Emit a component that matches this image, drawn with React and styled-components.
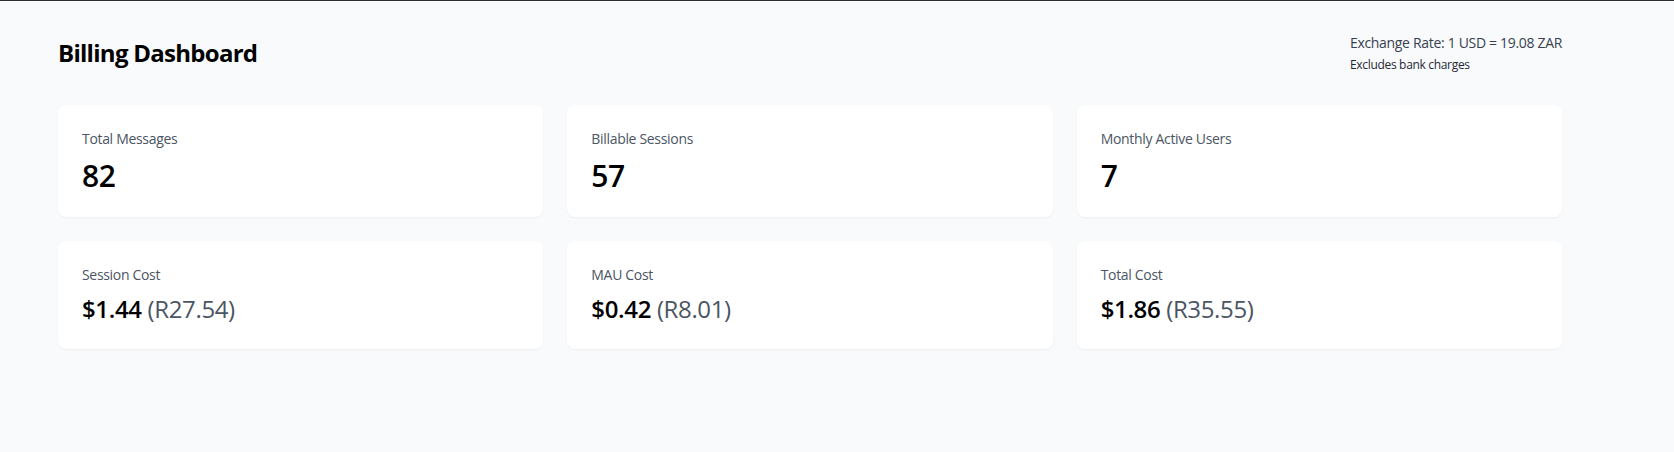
import React from "react";
import styled, { createGlobalStyle } from "styled-components";

const GlobalStyle = createGlobalStyle`
  * { box-sizing: border-box; }
  html, body { margin: 0; padding: 0; background: #f9fafb; }
  body {
    font-family: "Open Sans", "Noto Sans", sans-serif;
    color: #111827;
    letter-spacing: -0.02em;
  }
`;

const Page = styled.div`
  min-height: 452px;
  border-top: 1px solid #2e2e2e;
  background: #f9fafb;
  padding: 32px 112px 32px 58px;
`;

const Header = styled.header`
  display: flex;
  justify-content: space-between;
  align-items: center;
  margin-bottom: 32px;
`;

const Title = styled.h1`
  margin: 0;
  font-size: 24px;
  line-height: 32px;
  font-weight: 700;
  letter-spacing: -0.03em;
  color: #000;
`;

const RateBlock = styled.div`
  display: flex;
  flex-direction: column;
`;

const RateLine = styled.div`
  font-size: 14px;
  line-height: 20px;
  color: #374151;
`;

const RateNote = styled.div`
  margin-top: 4px;
  font-size: 12px;
  line-height: 16px;
  color: #1f2937;
`;

const Grid = styled.div`
  display: grid;
  grid-template-columns: repeat(3, 1fr);
  gap: 24px;
`;

const Card = styled.div`
  background: #fff;
  border-radius: 8px;
  padding: 24px;
  box-shadow: 0 1px 2px rgba(0, 0, 0, 0.05);
`;

const Label = styled.div`
  font-size: 14px;
  line-height: 20px;
  color: #4b5563;
`;

const Value = styled.div`
  margin-top: ${(p) => (p.$large ? "9px" : "8px")};
  font-size: ${(p) => (p.$large ? "30px" : "24px")};
  line-height: ${(p) => (p.$large ? "35px" : "32px")};
  font-weight: 600;
  letter-spacing: -0.015em;
  color: #000;
`;

const Converted = styled.span`
  font-weight: 400;
  color: #4b5563;
`;

const counts = [
  { label: "Total Messages", value: "82" },
  { label: "Billable Sessions", value: "57" },
  { label: "Monthly Active Users", value: "7" },
];

const costs = [
  { label: "Session Cost", usd: "$1.44", zar: "(R27.54)" },
  { label: "MAU Cost", usd: "$0.42", zar: "(R8.01)" },
  { label: "Total Cost", usd: "$1.86", zar: "(R35.55)" },
];

export default function App() {
  return (
    <>
      <GlobalStyle />
      <Page>
        <Header>
          <Title>Billing Dashboard</Title>
          <RateBlock>
            <RateLine>Exchange Rate: 1 USD = 19.08 ZAR</RateLine>
            <RateNote>Excludes bank charges</RateNote>
          </RateBlock>
        </Header>
        <Grid>
          {counts.map((c) => (
            <Card key={c.label}>
              <Label>{c.label}</Label>
              <Value $large>{c.value}</Value>
            </Card>
          ))}
          {costs.map((c) => (
            <Card key={c.label}>
              <Label>{c.label}</Label>
              <Value>
                {c.usd} <Converted>{c.zar}</Converted>
              </Value>
            </Card>
          ))}
        </Grid>
      </Page>
    </>
  );
}
